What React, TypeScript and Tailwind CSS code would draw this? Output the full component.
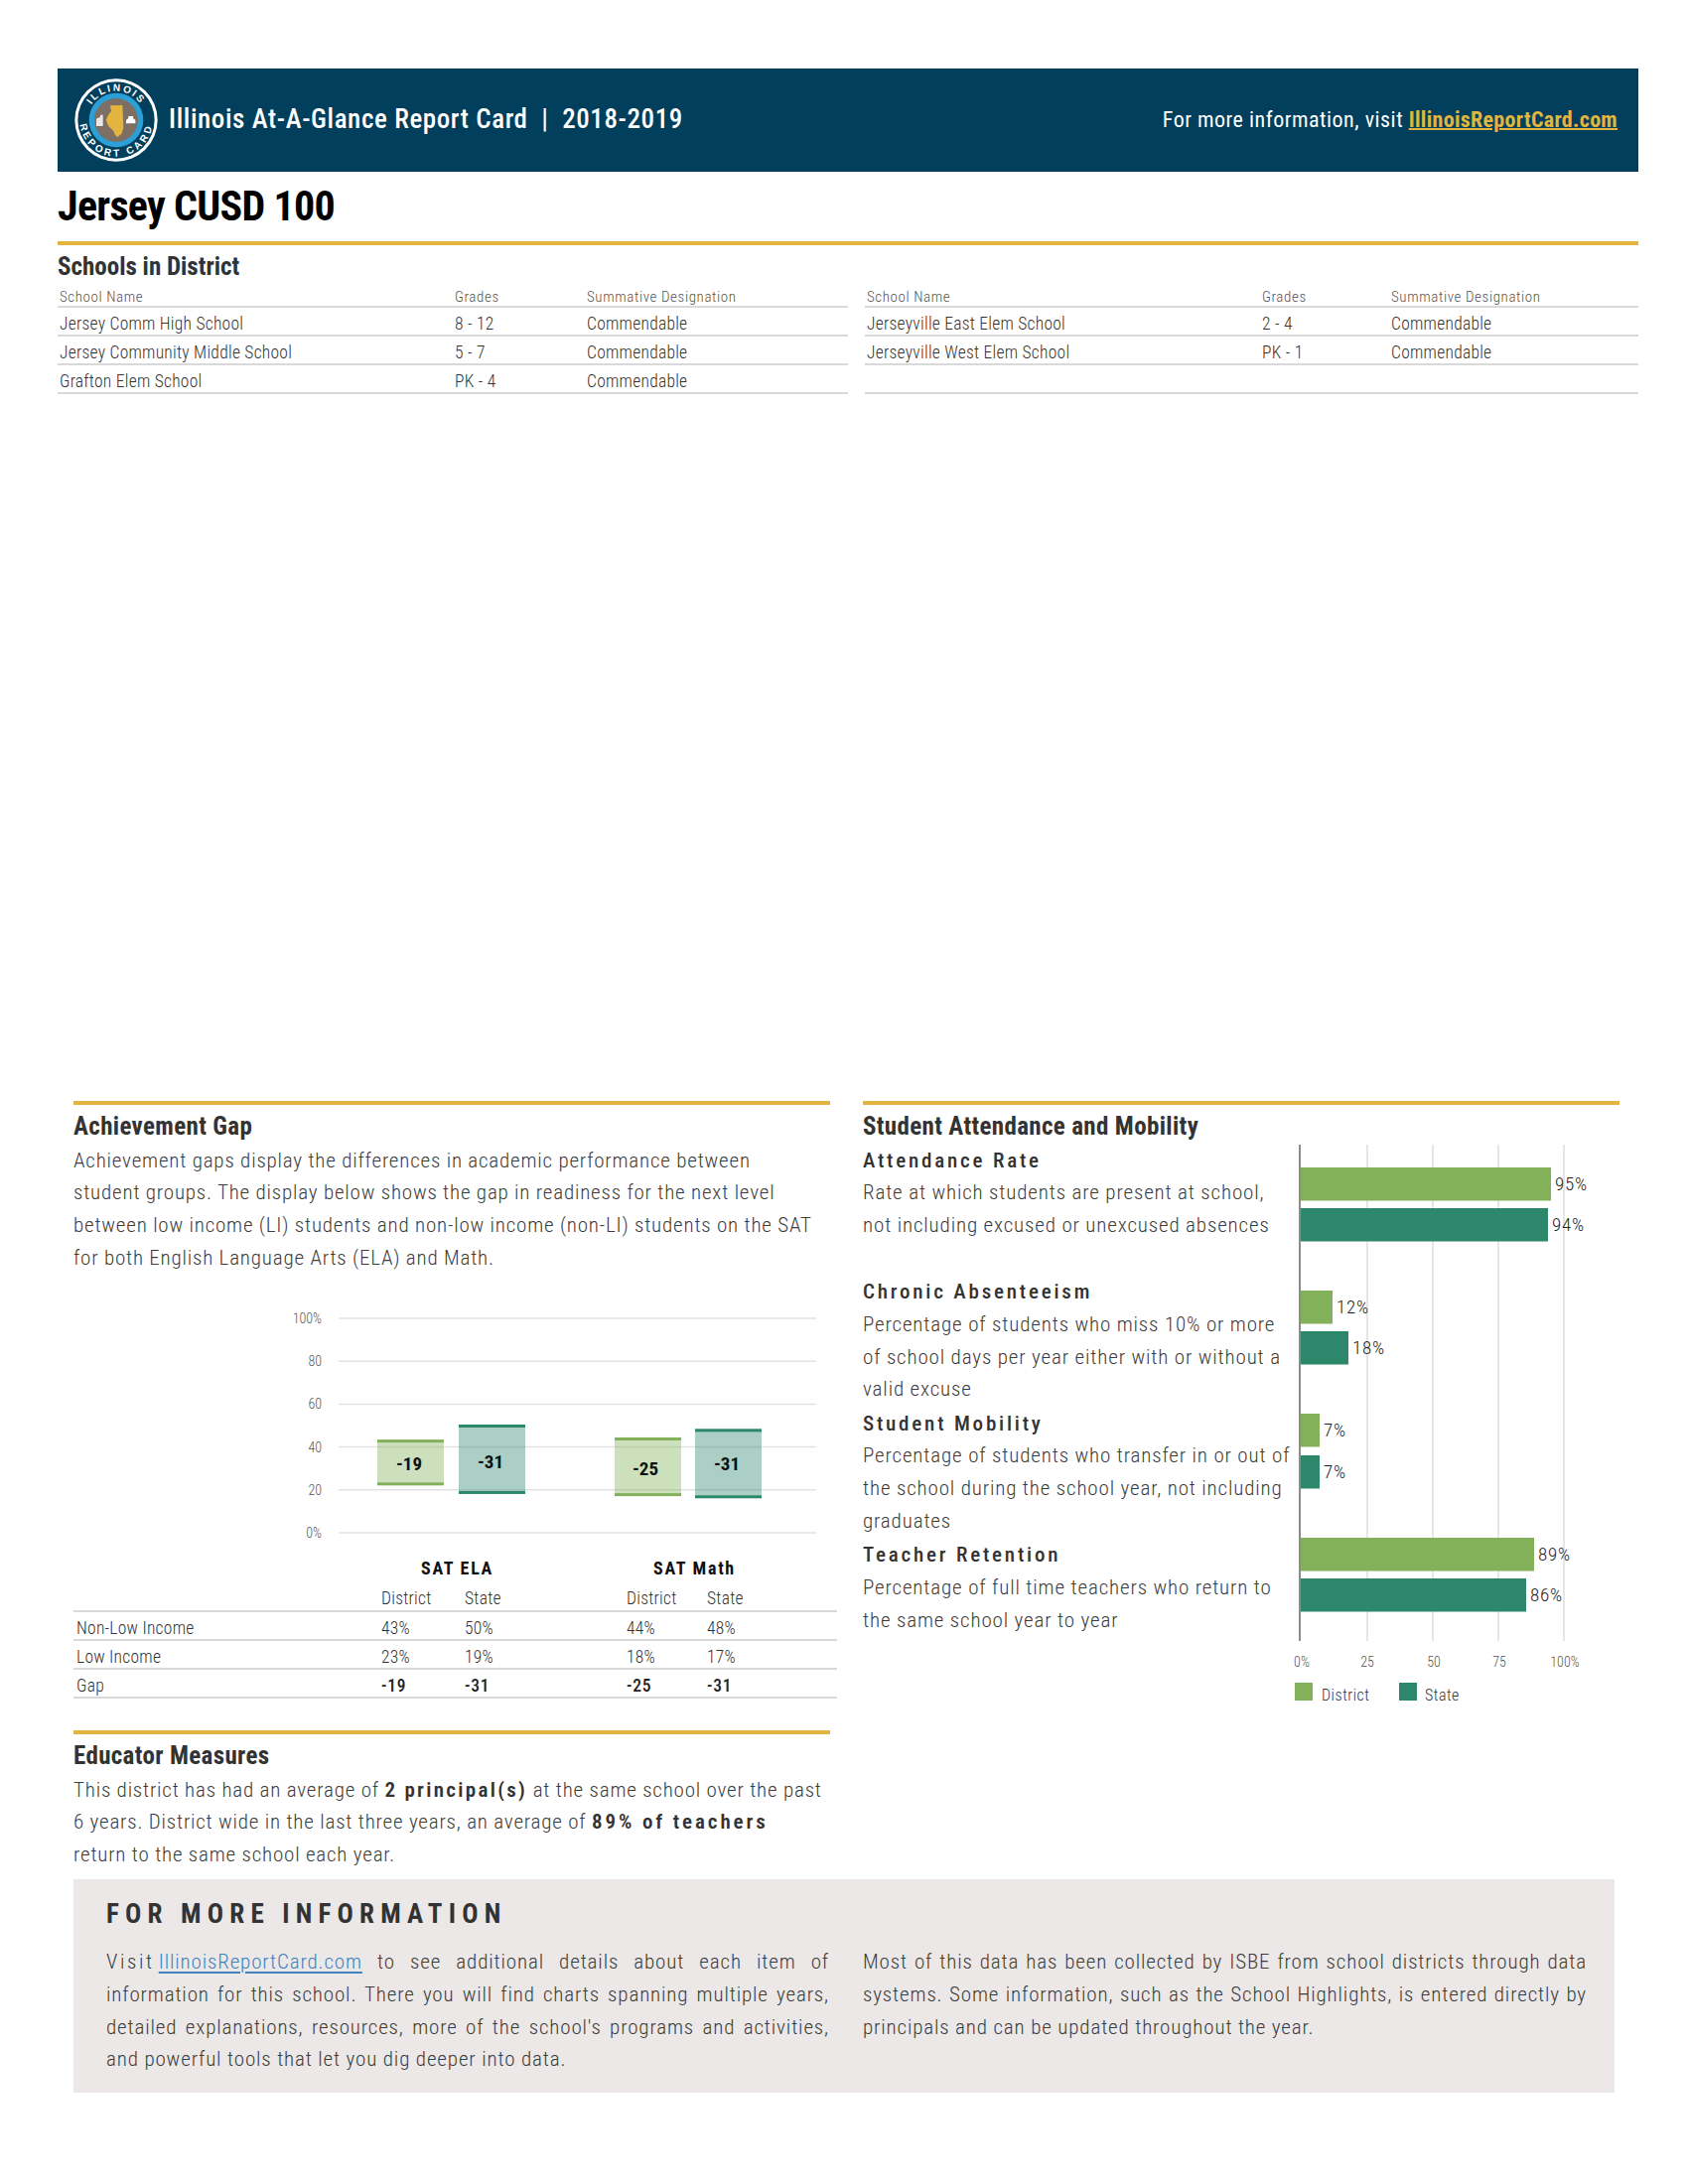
import React from 'react';

const schoolsLeft = [
  { name: 'Jersey Comm High School', grades: '8 - 12', status: 'Commendable' },
  { name: 'Jersey Community Middle School', grades: '5 - 7', status: 'Commendable' },
  { name: 'Grafton Elem School', grades: 'PK - 4', status: 'Commendable' },
];

const schoolsRight = [
  { name: 'Jerseyville East Elem School', grades: '2 - 4', status: 'Commendable' },
  { name: 'Jerseyville West Elem School', grades: 'PK - 1', status: 'Commendable' },
  { name: '', grades: '', status: '' },
];

const satRows = [
  { label: 'Non-Low Income', values: ['43%', '50%', '44%', '48%'], bold: false },
  { label: 'Low Income', values: ['23%', '19%', '18%', '17%'], bold: false },
  { label: 'Gap', values: ['-19', '-31', '-25', '-31'], bold: true },
];

const measures = [
  { title: 'Attendance Rate', text: 'Rate at which students are present at school, not including excused or unexcused absences' },
  { title: 'Chronic Absenteeism', text: 'Percentage of students who miss 10% or more of school days per year either with or without a valid excuse' },
  { title: 'Student Mobility', text: 'Percentage of students who transfer in or out of the school during the school year, not including graduates' },
  { title: 'Teacher Retention', text: 'Percentage of full time teachers who return to the same school year to year' },
];

const hBars = [
  { y: 1175, end: 1562, value: '95%', color: '#82b159' },
  { y: 1216, end: 1559, value: '94%', color: '#2d876b' },
  { y: 1299, end: 1342, value: '12%', color: '#82b159' },
  { y: 1340, end: 1358, value: '18%', color: '#2d876b' },
  { y: 1423, end: 1329, value: '7%', color: '#82b159' },
  { y: 1465, end: 1329, value: '7%', color: '#2d876b' },
  { y: 1548, end: 1545, value: '89%', color: '#82b159' },
  { y: 1589, end: 1537, value: '86%', color: '#2d876b' },
];

const gapBars = [
  { x: 380, hi: 43, lo: 23, label: '-19', lx: 412, ly: 1474, fill: '#82b159' },
  { x: 462, hi: 50, lo: 19, label: '-31', lx: 494, ly: 1472, fill: '#2d876b' },
  { x: 619, hi: 44, lo: 18, label: '-25', lx: 650, ly: 1479, fill: '#82b159' },
  { x: 700, hi: 48, lo: 17, label: '-31', lx: 732, ly: 1474, fill: '#2d876b' },
];

const toY = (v: number) => 1544 - v * 2.16;

const Logo = () => (
  <svg width="84" height="84" viewBox="47 56 252 252" className="shrink-0">
    <circle cx="173" cy="182" r="125" fill="#ffffff" />
    <circle cx="173" cy="182" r="116" fill="#023f5c" />
    <circle cx="173" cy="182" r="82" fill="#2a9fd8" />
    <circle cx="173" cy="182" r="66" fill="#7d6f63" />
    <path d="M155 138 L192 137 L195 205 L190 222 L178 233 L170 228 L165 215 L150 200 L142 182 L150 165 L158 155 Z" fill="#e3b53f" />
    <path d="M113 200 V178 L125 172 V166 H133 V200 Z" fill="#ece8e4" />
    <path d="M203 192 V182 L210 176 V170 H224 V176 L231 182 V192 Z" fill="#ffffff" />
    <defs>
      <path id="logoTop" d="M85 182 A88 88 0 0 1 261 182" />
      <path id="logoBottom" d="M63 182 A110 110 0 0 0 283 182" />
    </defs>
    <text fill="#ffffff" fontFamily="'Liberation Sans', sans-serif" fontWeight="700" fontSize="30" letterSpacing="6.5">
      <textPath href="#logoTop" startOffset="50%" textAnchor="middle">ILLINOIS</textPath>
    </text>
    <text fill="#ffffff" fontFamily="'Liberation Sans', sans-serif" fontWeight="700" fontSize="30" letterSpacing="9">
      <textPath href="#logoBottom" startOffset="50%" textAnchor="middle">REPORT CARD</textPath>
    </text>
  </svg>
);

const SchoolTable = ({ rows, widths, className }: { rows: typeof schoolsLeft; widths: number[]; className: string }) => (
  <table className={`table-fixed border-collapse ${className}`}>
    <colgroup>
      {widths.map((w, i) => (
        <col key={i} style={{ width: w }} />
      ))}
    </colgroup>
    <thead>
      <tr className="h-[24px] border-b-2 border-[#d9d9d9] text-left text-[15px] leading-[18px] tracking-[0.6px] text-[#555555]">
        <th className="pt-[6px] pl-[2px] font-light">School Name</th>
        <th className="pt-[6px] pl-[2px] font-light">Grades</th>
        <th className="pt-[6px] pl-[2px] font-light">Summative Designation</th>
      </tr>
    </thead>
    <tbody>
      {rows.map((r, i) => (
        <tr key={i} className="h-[29px] border-b-2 border-[#d9d9d9] text-[17.5px] leading-[20px] font-light tracking-[0.25px] text-[#333333]">
          <td className="pt-[4px] pl-[2px]">{r.name}</td>
          <td className="pt-[4px] pl-[2px]">{r.grades}</td>
          <td className="pt-[4px] pl-[2px]">{r.status}</td>
        </tr>
      ))}
    </tbody>
  </table>
);

const SectionTitle = ({ children }: { children: React.ReactNode }) => (
  <div className="border-t-4 border-[#e3b53f]">
    <h2 className="flex h-[39.5px] items-center pt-[3px] text-[25px] font-bold tracking-[0.35px] text-[#333333] [font-stretch:75%]">{children}</h2>
  </div>
);

const GapChart = () => (
  <svg width="560" height="250" viewBox="280 1310 560 250" className="mt-[26.5px] ml-[206px] block">
    {[0, 20, 40, 60, 80, 100].map((t) => (
      <g key={t}>
        <line x1="341" x2="822" y1={toY(t)} y2={toY(t)} stroke="#e2e2e2" strokeWidth="1.5" />
        <text x="324" y={toY(t) + 5} textAnchor="end" fontSize="14" fontWeight="300" fill="#555555">
          {t === 100 || t === 0 ? `${t}%` : t}
        </text>
      </g>
    ))}
    {gapBars.map((b) => (
      <g key={b.x}>
        <rect x={b.x} y={toY(b.hi)} width="67" height={toY(b.lo) - toY(b.hi)} fill={b.fill} fillOpacity="0.4" />
        <rect x={b.x} y={toY(b.hi) - 1} width="67" height="3" fill={b.fill} />
        <rect x={b.x} y={toY(b.lo) - 1} width="67" height="3" fill={b.fill} />
        <text x={b.lx} y={b.ly + 7} textAnchor="middle" fontSize="19" fontWeight="700" fill="#111111">
          {b.label}
        </text>
      </g>
    ))}
  </svg>
);

const AttendanceChart = () => (
  <svg width="330" height="570" viewBox="1300 1152 330 570" className="block shrink-0">
    {[1377, 1443, 1509, 1575].map((x) => (
      <line key={x} x1={x} x2={x} y1="1152" y2="1652" stroke="#dedede" strokeWidth="1.5" />
    ))}
    <line x1="1309" x2="1309" y1="1152" y2="1652" stroke="#8c8c8c" strokeWidth="2" />
    {hBars.map((b) => (
      <g key={b.y}>
        <rect x="1310" y={b.y} width={b.end - 1310} height="33.5" fill={b.color} />
        <text x={b.end + 4} y={b.y + 23} fontSize="19" fontWeight="300" letterSpacing="0.8" fill="#222222">
          {b.value}
        </text>
      </g>
    ))}
    {[
      ['0%', 1311],
      ['25', 1377],
      ['50', 1444],
      ['75', 1510],
      ['100%', 1576],
    ].map(([t, x]) => (
      <text key={t} x={x} y="1678" textAnchor="middle" fontSize="14" fontWeight="300" fill="#555555">
        {t}
      </text>
    ))}
    <rect x="1304" y="1694" width="18" height="18" fill="#82b159" />
    <text x="1331" y="1712" fontSize="16" fontWeight="300" letterSpacing="0.5" fill="#333333">District</text>
    <rect x="1409" y="1694" width="18" height="18" fill="#2d876b" />
    <text x="1435" y="1712" fontSize="16" fontWeight="300" letterSpacing="0.5" fill="#333333">State</text>
  </svg>
);

export default function App() {
  return (
    <div className="min-h-[2200px] w-[1700px] bg-white pt-[69px] font-['Roboto',sans-serif] text-[#3c3c3c] [font-stretch:80%]">
      <div className="ml-[58px] w-[1592px]">
        <header className="flex h-[104px] items-center justify-between bg-[#023f5c] pr-[21px] pl-[17px]">
          <div className="flex items-center gap-[11px]">
            <Logo />
            <span className="pb-[2px] text-[27px] font-medium tracking-[0.6px] whitespace-pre text-white [font-stretch:85%]">Illinois At-A-Glance Report Card  |  2018-2019</span>
          </div>
          <span className="pb-[2px] text-[22px] font-normal tracking-[0.5px] text-white [font-stretch:75%]">
            For more information, visit{' '}
            <a className="font-bold tracking-[0.3px] text-[#e3b53f] underline decoration-2">IllinoisReportCard.com</a>
          </span>
        </header>

        <h1 className="flex h-[70px] items-center pb-[2px] text-[42px] font-bold tracking-[-0.7px] text-black [font-stretch:75%]">Jersey CUSD 100</h1>
        <div className="h-[4px] bg-[#e3b53f]" />
        <h2 className="mt-[8px] text-[25px] font-bold leading-[28px] text-[#333333] [font-stretch:75%]">Schools in District</h2>
        <div className="mt-[1px] flex justify-between">
          <SchoolTable rows={schoolsLeft} widths={[398, 133, 265]} className="w-[796px]" />
          <SchoolTable rows={schoolsRight} widths={[398, 130, 251]} className="w-[779px]" />
        </div>
      </div>

      <div className="mt-[712px] ml-[74px] flex gap-[26px]">
        <div className="w-[769px]">
          <div className="w-[762px]">
            <SectionTitle>Achievement Gap</SectionTitle>
            <p className="text-[21px] font-light leading-[32.75px] tracking-[0.8px]">
              Achievement gaps display the differences in academic performance between
              <br />
              student groups. The display below shows the gap in readiness for the next level
              <br />
              between low income (LI) students and non-low income (non-LI) students on the SAT
              <br />
              for both English Language Arts (ELA) and Math.
            </p>
          </div>
          <GapChart />
          <table className="mt-[5px] w-[769px] table-fixed border-collapse">
            <colgroup>
              <col className="w-[307px]" />
              <col className="w-[84px]" />
              <col className="w-[163px]" />
              <col className="w-[81px]" />
              <col />
            </colgroup>
            <thead>
              <tr className="h-[28px] text-left text-[18px] font-bold tracking-[1.7px] text-[#111111] [font-stretch:75%]">
                <th />
                <th colSpan={2} className="pl-[43px]">SAT ELA</th>
                <th colSpan={2} className="pl-[30px]">SAT Math</th>
              </tr>
              <tr className="h-[30px] border-b-2 border-[#d9d9d9] text-left text-[17.5px] leading-[20px] tracking-[0.25px] text-[#333333]">
                <th />
                <th className="pt-[5px] pl-[3px] font-light">District</th>
                <th className="pt-[5px] pl-[3px] font-light">State</th>
                <th className="pt-[5px] pl-[3px] font-light">District</th>
                <th className="pt-[5px] pl-[3px] font-light">State</th>
              </tr>
            </thead>
            <tbody>
              {satRows.map((r) => (
                <tr key={r.label} className="h-[29px] border-b-2 border-[#d9d9d9] text-[17.5px] leading-[20px] font-light tracking-[0.25px] text-[#333333]">
                  <td className="pt-[4px] pl-[3px]">{r.label}</td>
                  {r.values.map((v, i) => (
                    <td key={i} className={r.bold ? 'pt-[4px] pl-[3px] font-medium tracking-[0.8px] text-[#222222]' : 'pt-[4px] pl-[3px]'}>
                      {v}
                    </td>
                  ))}
                </tr>
              ))}
            </tbody>
          </table>
          <div className="mt-[32px] w-[762px]">
            <SectionTitle>Educator Measures</SectionTitle>
            <p className="text-[21px] font-light leading-[32.75px] tracking-[0.8px]">
              This district has had an average of <b className="font-semibold tracking-[2.3px] text-[#333333] [font-stretch:75%]">2 principal(s)</b> at the
              same school over the past
              <br />
              6 years. District wide in the last three years, an average of{' '}
              <b className="font-semibold tracking-[2.9px] text-[#333333] [font-stretch:75%]">89% of teachers</b>
              <br />
              return to the same school each year.
            </p>
          </div>
        </div>

        <div className="w-[762px]">
          <SectionTitle>Student Attendance and Mobility</SectionTitle>
          <div className="flex">
            <div className="w-[431px]">
              {measures.map((m) => (
                <div key={m.title} className="h-[132.5px] text-[21px] font-light leading-[32.75px]">
                  <h3 className="font-medium tracking-[2.8px] text-[#333333] [font-stretch:75%]">{m.title}</h3>
                  <p className="tracking-[0.85px]">{m.text}</p>
                </div>
              ))}
            </div>
            <AttendanceChart />
          </div>
        </div>
      </div>

      <section className="absolute top-[1893px] left-[74px] h-[215px] w-[1552px] bg-[#ebe8e7] px-[33px] pt-[20px]">
        <h2 className="text-[27px] leading-[30px] font-bold tracking-[6.2px] text-[#333333] [font-stretch:75%]">FOR MORE INFORMATION</h2>
        <div className="mt-[17px] grid grid-cols-[728px_729px] gap-[34px] text-[21px] font-light leading-[32.75px] tracking-[0.85px]">
          <p className="text-justify">
            <span className="mr-[4px] inline-block tracking-[2.6px]">Visit</span>
            <a className="text-[#3f82bd] underline decoration-2 underline-offset-[3px]">IllinoisReportCard.com</a> to see additional details about each item of
            information for this school. There you will find charts spanning multiple years, detailed explanations, resources,
            more of the school's programs and activities, and powerful tools that let you dig deeper into data.
          </p>
          <p className="text-justify">
            Most of this data has been collected by ISBE from school districts through data systems. Some information, such as
            the School Highlights, is entered directly by principals and can be updated throughout the year.
          </p>
        </div>
      </section>
    </div>
  );
}
